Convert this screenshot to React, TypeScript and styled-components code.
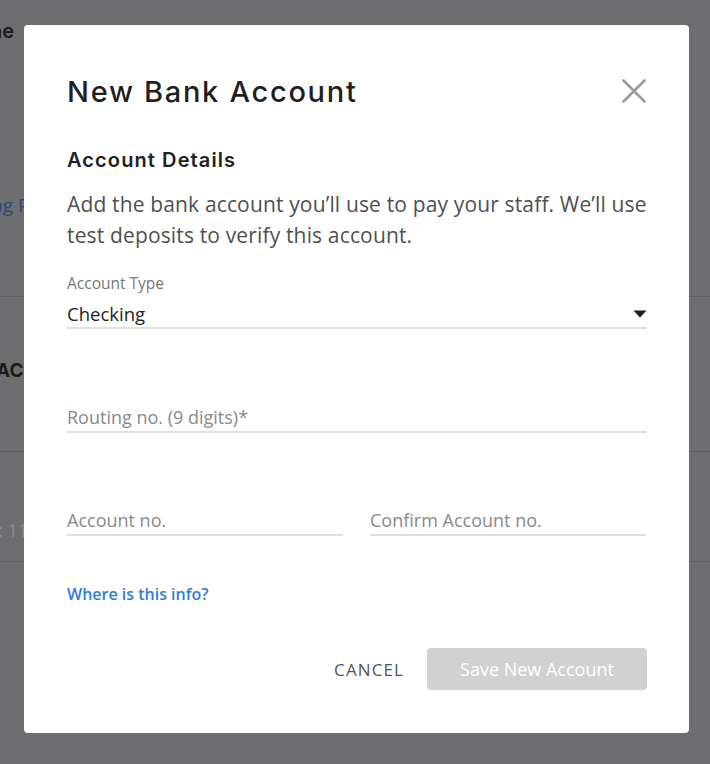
import React from 'react';
import styled, { createGlobalStyle } from 'styled-components';

const GlobalStyle = createGlobalStyle`
  html, body {
    margin: 0;
    padding: 0;
    background: #6e6d6f;
    font-family: 'Open Sans', 'Liberation Sans', sans-serif;
  }
  * { box-sizing: border-box; }
`;

const Screen = styled.div`
  position: relative;
  width: 710px;
  height: 764px;
  overflow: hidden;
  background: #6e6d6f;
`;

/* the page behind the dimmed overlay */
const BackPage = styled.div`
  display: flex;
  flex-direction: column;
  width: 710px;
`;

const BackSection = styled.div<{ $height: number; $line?: boolean }>`
  height: ${p => p.$height}px;
  border-bottom: ${p => (p.$line ? '1px solid #5f5e61' : 'none')};
  display: flex;
  flex-direction: column;
`;

const BackText = styled.span<{ $top: number; $shift: number; $color: string; $size: number; $weight?: number; $font?: string }>`
  margin-top: ${p => p.$top}px;
  margin-left: ${p => p.$shift}px;
  color: ${p => p.$color};
  font-size: ${p => p.$size}px;
  font-weight: ${p => p.$weight || 400};
  font-family: ${p => p.$font || "'Open Sans', sans-serif"};
  line-height: 1;
  white-space: nowrap;
`;

const Modal = styled.div`
  position: absolute;
  left: 24px;
  top: 25px;
  width: 665px;
  height: 708px;
  background: #fff;
  border-radius: 4px;
  padding: 44px 42px 43px 43px;
  display: flex;
  flex-direction: column;
`;

const Header = styled.div`
  display: flex;
  justify-content: space-between;
  align-items: center;
  height: 44px;
`;

const Title = styled.h1`
  margin: 0;
  font-family: 'Inter', 'Noto Sans', sans-serif;
  font-weight: 500;
  font-size: 29px;
  letter-spacing: 1.7px;
  color: #1f1f1f;
`;

const CloseButton = styled.button`
  border: none;
  background: none;
  padding: 0;
  width: 26px;
  height: 26px;
  display: flex;
  align-items: center;
  justify-content: center;
  cursor: pointer;
`;

const SectionTitle = styled.h2`
  margin: 34px 0 0;
  font-family: 'Inter', 'Noto Sans', sans-serif;
  font-weight: 600;
  font-size: 20px;
  line-height: 26px;
  letter-spacing: 1.1px;
  color: #222;
`;

const Intro = styled.p`
  margin: 16px 0 0;
  font-size: 21px;
  line-height: 31px;
  letter-spacing: 0.15px;
  color: #505050;
`;

const SelectLabel = styled.div`
  margin-top: 22px;
  font-size: 15.5px;
  line-height: 20px;
  color: #777;
`;

const SelectRow = styled.div`
  margin-top: 7px;
  display: flex;
  justify-content: space-between;
  align-items: center;
  height: 29px;
  border-bottom: 2px solid #e0e0e0;
  font-size: 18.5px;
  color: #222;
`;

const Field = styled.div<{ $gap: number }>`
  margin-top: ${p => p.$gap}px;
  height: 29px;
  padding-top: 1px;
  border-bottom: 2px solid #e0e0e0;
  font-size: 18px;
  line-height: 24px;
  color: #8a8a8a;
`;

const FieldGrid = styled.div`
  display: grid;
  grid-template-columns: 1fr 1fr;
  column-gap: 27px;
  margin-right: 1px;
`;

const HelpLink = styled.a`
  margin-top: 48px;
  font-size: 16px;
  line-height: 20px;
  font-weight: 600;
  color: #2f7de1;
  text-decoration: none;
  cursor: pointer;
`;

const Footer = styled.div`
  margin-top: auto;
  display: flex;
  justify-content: flex-end;
  align-items: center;
  gap: 23px;
`;

const CancelButton = styled.button`
  border: none;
  background: none;
  padding: 0;
  font-family: inherit;
  font-size: 17px;
  font-weight: 500;
  letter-spacing: 1.1px;
  color: #555;
  cursor: pointer;
`;

const SaveButton = styled.button`
  width: 220px;
  height: 42px;
  border: none;
  border-radius: 4px;
  background: #d1d1d1;
  color: #fff;
  font-family: inherit;
  font-size: 18px;
  font-weight: 500;
  cursor: not-allowed;
`;

const App: React.FC = () => (
  <Screen>
    <GlobalStyle />
    <BackPage>
      <BackSection $height={297} $line>
        <BackText $top={21} $shift={-10} $color="#1c1c1c" $size={20} $weight={600} $font="'Inter', sans-serif">
          ne
        </BackText>
        <BackText $top={155} $shift={-9} $color="#2c4778" $size={19}>
          ng P
        </BackText>
      </BackSection>
      <BackSection $height={155} $line>
        <BackText $top={64} $shift={-4} $color="#1b1b1b" $size={19} $weight={700} $font="'Inter', sans-serif">
          ACC
        </BackText>
      </BackSection>
      <BackSection $height={110} $line>
        <BackText $top={69} $shift={-2} $color="#8c8b8e" $size={18}>
          : 11
        </BackText>
      </BackSection>
    </BackPage>

    <Modal>
      <Header>
        <Title>New Bank Account</Title>
        <CloseButton aria-label="Close">
          <svg width="24" height="24" viewBox="0 0 24 24">
            <path d="M1.5 1.5 L22.5 22.5 M22.5 1.5 L1.5 22.5" stroke="#9b9b9b" strokeWidth="2.6" strokeLinecap="round" />
          </svg>
        </CloseButton>
      </Header>

      <SectionTitle>Account Details</SectionTitle>
      <Intro>
        Add the bank account you’ll use to pay your staff. We’ll use test deposits to verify this account.
      </Intro>

      <SelectLabel>Account Type</SelectLabel>
      <SelectRow>
        <span>Checking</span>
        <svg width="14" height="8" viewBox="0 0 14 8">
          <path d="M0.5 0.5 H13.5 L7 7.5 Z" fill="#1e1e1e" />
        </svg>
      </SelectRow>

      <Field $gap={75}>Routing no. (9 digits)*</Field>

      <FieldGrid>
        <Field $gap={74}>Account no.</Field>
        <Field $gap={74}>Confirm Account no.</Field>
      </FieldGrid>

      <HelpLink>Where is this info?</HelpLink>

      <Footer>
        <CancelButton>CANCEL</CancelButton>
        <SaveButton>Save New Account</SaveButton>
      </Footer>
    </Modal>
  </Screen>
);

export default App;
